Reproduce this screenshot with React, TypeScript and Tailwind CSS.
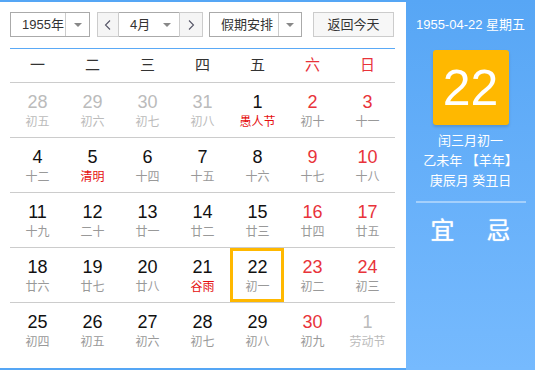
import React from 'react';

type Day = {
  n: number;
  lunar: string;
  other?: boolean;
  festival?: boolean;
  selected?: boolean;
};

const font = { fontFamily: '"Liberation Sans", "Noto Sans CJK SC", sans-serif' };

const weeks: Day[][] = [
  [
    { n: 28, lunar: '初五', other: true },
    { n: 29, lunar: '初六', other: true },
    { n: 30, lunar: '初七', other: true },
    { n: 31, lunar: '初八', other: true },
    { n: 1, lunar: '愚人节', festival: true },
    { n: 2, lunar: '初十' },
    { n: 3, lunar: '十一' },
  ],
  [
    { n: 4, lunar: '十二' },
    { n: 5, lunar: '清明', festival: true },
    { n: 6, lunar: '十四' },
    { n: 7, lunar: '十五' },
    { n: 8, lunar: '十六' },
    { n: 9, lunar: '十七' },
    { n: 10, lunar: '十八' },
  ],
  [
    { n: 11, lunar: '十九' },
    { n: 12, lunar: '二十' },
    { n: 13, lunar: '廿一' },
    { n: 14, lunar: '廿二' },
    { n: 15, lunar: '廿三' },
    { n: 16, lunar: '廿四' },
    { n: 17, lunar: '廿五' },
  ],
  [
    { n: 18, lunar: '廿六' },
    { n: 19, lunar: '廿七' },
    { n: 20, lunar: '廿八' },
    { n: 21, lunar: '谷雨', festival: true },
    { n: 22, lunar: '初一', selected: true },
    { n: 23, lunar: '初二' },
    { n: 24, lunar: '初三' },
  ],
  [
    { n: 25, lunar: '初四' },
    { n: 26, lunar: '初五' },
    { n: 27, lunar: '初六' },
    { n: 28, lunar: '初七' },
    { n: 29, lunar: '初八' },
    { n: 30, lunar: '初九' },
    { n: 1, lunar: '劳动节', other: true },
  ],
];

const weekdays = ['一', '二', '三', '四', '五', '六', '日'];

const Caret = () => (
  <span className="block w-0 h-0 border-x-[4px] border-x-transparent border-t-[4px] border-t-[#888]" />
);

const Chevron = ({ dir }: { dir: 'left' | 'right' }) => (
  <svg width="8" height="12" viewBox="0 0 8 12" fill="none">
    <polyline
      points={dir === 'left' ? '6,1.5 1.5,6 6,10.5' : '2,1.5 6.5,6 2,10.5'}
      stroke="#556"
      strokeWidth="1.1"
    />
  </svg>
);

const App = () => {
  return (
    <div className="flex w-[535px] h-[370px] bg-white text-[#333]" style={font}>
      <div className="w-[406px] border-t-2 border-b-2 border-[#55a6f5] pl-[10px] pr-[11px]">
        {/* toolbar */}
        <div className="flex items-center h-[25px] mt-[10px] text-[13px] text-[#333]">
          <div className="flex w-[80px] h-full border border-[#aaa]">
            <div className="flex-1 flex items-center pl-[11px]">1955年</div>
            <div className="w-[24px] flex items-center justify-center border-l border-[#ccc]">
              <Caret />
            </div>
          </div>
          <div className="flex w-[106px] h-full ml-[7px]">
            <div className="w-[22px] flex items-center justify-center bg-[#f5f5f5] border border-[#ccc]">
              <Chevron dir="left" />
            </div>
            <div className="w-[60px] flex items-center border-y border-[#aaa] pl-[11px]">
              <span className="flex-1">4月</span>
              <span className="mr-[8px]">
                <Caret />
              </span>
            </div>
            <div className="w-[24px] flex items-center justify-center bg-[#f5f5f5] border border-[#ccc]">
              <Chevron dir="right" />
            </div>
          </div>
          <div className="flex w-[93px] h-full ml-[6px] border border-[#aaa]">
            <div className="flex-1 flex items-center pl-[11px]">假期安排</div>
            <div className="w-[23px] flex items-center justify-center border-l border-[#ccc]">
              <Caret />
            </div>
          </div>
          <div className="w-[81px] h-full ml-[11px] flex items-center justify-center bg-[#f7f7f7] border border-[#ccc]">
            返回今天
          </div>
        </div>

        <div className="mt-[11px] h-px bg-[#5aa9f6]" />

        {/* weekday header */}
        <div className="grid grid-cols-7 h-[34px] border-b border-[#ccc] text-[15px]">
          {weekdays.map((w, i) => (
            <div
              key={w}
              className={`flex items-center justify-center ${i >= 5 ? 'text-[#e8333a]' : 'text-[#333]'}`}
            >
              {w}
            </div>
          ))}
        </div>

        {/* days */}
        {weeks.map((week, r) => (
          <div
            key={r}
            className={`grid grid-cols-7 h-[55px] ${r < weeks.length - 1 ? 'border-b border-[#ccc]' : ''}`}
          >
            {week.map((d, i) => {
              const weekend = i >= 5;
              const numColor = d.other ? 'text-[#bbb]' : weekend ? 'text-[#e8333a]' : 'text-[#111]';
              const lunarColor = d.other ? 'text-[#bbb]' : d.festival ? 'text-[#e50f0f]' : 'text-[#999]';
              return (
                <div key={i} className="relative flex flex-col items-center pt-[9px]">
                  {d.selected && (
                    <div className="absolute left-0 top-0 w-[54px] h-full border-[3px] border-[#ffb800]" />
                  )}
                  <span className={`text-[18px] leading-[20px] ${numColor}`}>{d.n}</span>
                  <span className={`text-[12px] leading-[14px] mt-[3px] ${lunarColor}`}>{d.lunar}</span>
                </div>
              );
            })}
          </div>
        ))}
      </div>

      {/* right panel */}
      <div className="flex-1 flex flex-col items-center bg-gradient-to-b from-[#57a6f5] to-[#76bafe] text-white">
        <div className="mt-[17px] text-[13px] leading-[16px]">1955-04-22 星期五</div>
        <div className="mt-[17px] w-[76px] h-[75px] rounded-[3px] bg-[#ffb800] shadow-[0_2px_3px_rgba(0,0,0,0.15)] flex items-center justify-center text-[50px] leading-none">
          22
        </div>
        <div className="mt-[6px] text-[13px] leading-[20px] text-center">
          <div>闰三月初一</div>
          <div>乙未年 【羊年】</div>
          <div>庚辰月 癸丑日</div>
        </div>
        <div className="mt-[10px] w-[110px] h-[2px] bg-white/40" />
        <div className="mt-[13px] flex gap-[32px] text-[24px] leading-[30px] font-normal [text-shadow:0_0_1px_rgba(255,255,255,0.9)]">
          <span>宜</span>
          <span>忌</span>
        </div>
      </div>
    </div>
  );
};

export default App;
